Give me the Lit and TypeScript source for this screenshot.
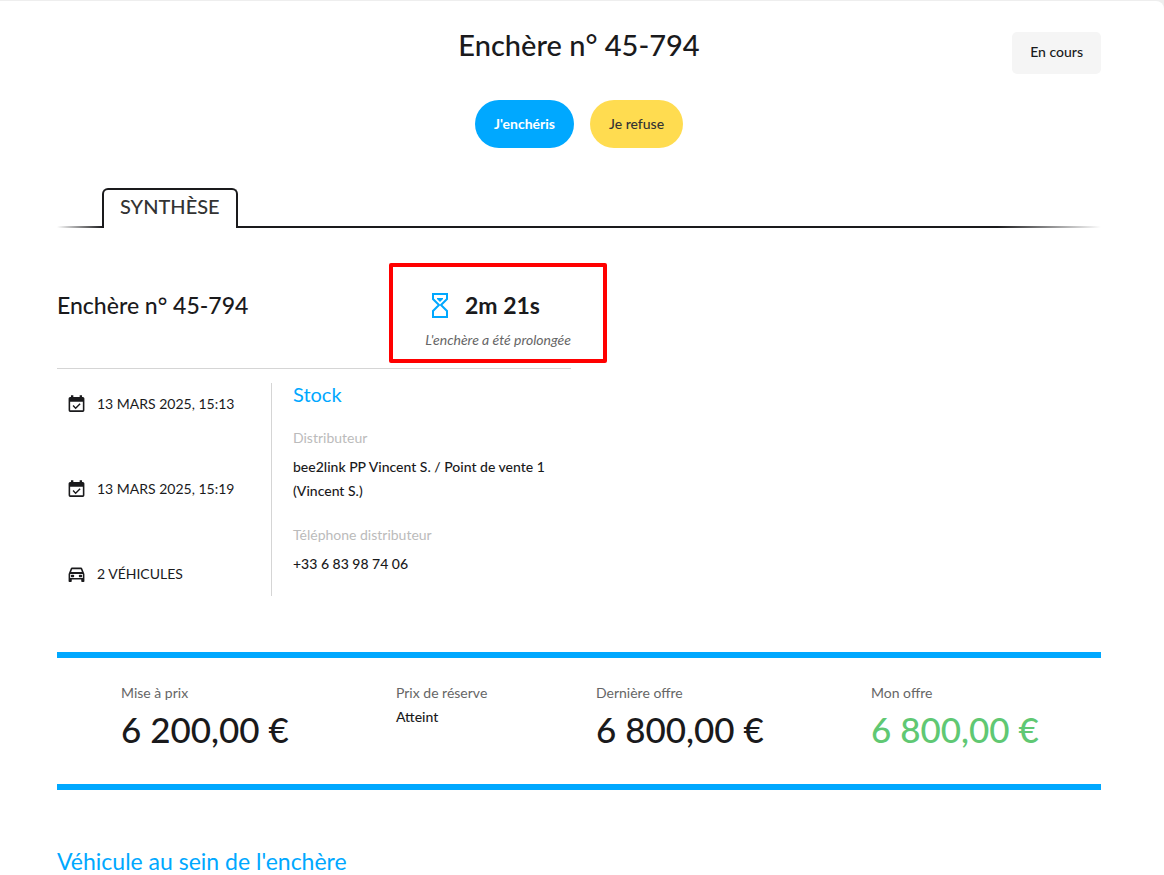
import { LitElement, html, css, svg } from "lit";
import { customElement } from "lit/decorators.js";

const calendar = svg`<path d="M20 3h-1V1h-3v2H8V1H5v2H4a2 2 0 0 0-2 2v15a2 2 0 0 0 2 2h16a2 2 0 0 0 2-2V5a2 2 0 0 0-2-2zm0 17H4V9h16zM17.200 12.200 15.900 11 10.900 16 8.300 13.400 7 14.600 10.900 18.500z"/>`;
const car = svg`<path d="M19.300 5c-.3-.7-.9-1.200-1.600-1.200H6.300c-.7 0-1.300.5-1.600 1.200L2 12v9c0 .6.450 1 1 1h2c.6 0 1-.4 1-1v-2h12v2c0 .6.450 1 1 1h2c.6 0 1-.4 1-1v-9zM6.500 6h11l1.300 3.500H5.200zM20 17H4v-5h16z"/><rect x="5" y="13" width="4" height="3" rx="1"/><rect x="15" y="13" width="4" height="3" rx="1"/>`;

@customElement("app-root")
export class AppRoot extends LitElement {
  static styles = css`
    :host { display: block; min-height: 100vh; overflow: hidden; font-family: Lato, sans-serif; font-size: 14px; line-height: 24px; color: #1a1a1c; background: #eee; padding-top: 1px; box-sizing: border-box; }
    * { box-sizing: border-box; }
    h1, h2, h3, p, dl, dd, ul { margin: 0; padding: 0; font-weight: 400; }
    main { padding: 31px 63px 0 57px; background: #fff; border-top-right-radius: 8px; min-height: 100vh; }
    header { display: grid; grid-template-columns: 1fr auto 1fr; align-items: start; }
    h1 { grid-column: 2; font-size: 29px; line-height: 26px; font-weight: 500; }
    .status { justify-self: end; padding: 8px 18px 10px; border-radius: 5px; background: #f5f5f5; font-weight: 500; }
    .actions { display: flex; justify-content: center; gap: 16px; margin-top: 26px; }
    button { font: inherit; border: 0; border-radius: 24px; height: 48px; padding: 0 19px; background: #ffdc50; color: #333; font-weight: 500; }
    .bid { background: #00a8ff; color: #fff; font-weight: 700; }
    .tabs { display: flex; margin-top: 40px; align-items: flex-end; }
    .line { height: 2px; width: 46px; background: linear-gradient(to right, transparent, #1a1a1c); }
    .rest { flex: 1; width: auto; background: linear-gradient(to left, transparent, #1a1a1c 12%); }
    .tab { height: 40px; margin-left: -1px; border: 2px solid #1a1a1c; border-bottom: 0; border-radius: 6px 6px 0 0; background: #fff; color: #333; padding: 0 16px 6px; font-size: 20px; line-height: 32px; }
    .summary { width: 514px; margin-top: 35px; }
    .heading { display: flex; justify-content: space-between; align-items: flex-start; height: 106px; border-bottom: 1px solid #d5d5d5; }
    h2 { font-size: 23px; line-height: 28px; }
    .heading h2 { margin-top: 28px; font-weight: 500; }
    .timer { border: 4px solid #f00; border-radius: 2px; width: 218px; height: 100px; margin-right: -36px; padding: 24px 32px 0 32px; }
    .time { display: flex; align-items: center; gap: 14px; padding-left: 4px; font-size: 23px; line-height: 28px; font-weight: 700; }
    .time svg { width: 22px; height: 28px; fill: none; stroke: #00a8ff; }
    .timer p { font-style: italic; color: #666; margin-top: 9px; line-height: 24px; text-align: right; white-space: nowrap; }
    .details { display: flex; margin-top: 14px; min-height: 213px; }
    ul { list-style: none; width: 215px; border-right: 1px solid #d5d5d5; display: flex; flex-direction: column; gap: 61px; padding: 9px 0 0 10px; }
    li { display: flex; align-items: center; gap: 11px; }
    li svg { width: 19px; height: 20px; fill: #1a1a1c; }
    .stock { flex: 1; padding-left: 21px; }
    h3 { color: #00a8ff; font-size: 20px; line-height: 22px; }
    .stock dt { color: #bbb; margin-top: 21px; }
    .stock dd { margin-top: 5px; font-weight: 500; }
    .stock dd + dt { margin-top: 20px; }
    .prices { display: grid; grid-template-columns: 275fr 200fr 275fr 230fr; border: solid #00a8ff; border-width: 6px 0; margin-top: 56px; padding: 23px 0 31px 64px; }
    .prices dt { color: #666; }
    .prices dd { font-weight: 500; }
    .prices .amount { font-size: 35px; line-height: 48px; white-space: nowrap; }
    .mine { color: #60c873; }
    .vehicles { color: #00a8ff; margin-top: 57px; }
  `;

  private stamp(icon: unknown, text: string) {
    return html`<li><svg viewBox="0 0 24 24" aria-hidden="true">${icon}</svg><span>${text}</span></li>`;
  }

  private price(label: string, value: string, cls: string) {
    return html`<div><dt>${label}</dt><dd class=${cls}>${value}</dd></div>`;
  }

  render() {
    return html`<main>
      <header><h1>Enchère n° 45-794</h1><span class="status">En cours</span></header>
      <div class="actions"><button class="bid">J'enchéris</button><button>Je refuse</button></div>
      <div class="tabs" role="tablist"><span class="line"></span><button class="tab" role="tab" aria-selected="true">SYNTHÈSE</button><span class="line rest"></span></div>
      <section class="summary">
        <div class="heading"><h2>Enchère n° 45-794</h2>
          <div class="timer"><div class="time"><svg viewBox="0 0 22 28" aria-hidden="true"><path stroke-width="2" d="M4 3H18V8L12 14L18 20V26H4V20L10 14L4 8Z"/><path fill="#00a8ff" stroke="none" d="M8 7H14V8L11 11L8 8Z"/></svg><span>2m 21s</span></div><p>L'enchère a été prolongée</p></div>
        </div>
        <div class="details">
          <ul>${this.stamp(calendar, "13 MARS 2025, 15:13")}${this.stamp(calendar, "13 MARS 2025, 15:19")}${this.stamp(car, "2 VÉHICULES")}</ul>
          <div class="stock"><h3>Stock</h3><dl><dt>Distributeur</dt><dd>bee2link PP Vincent S. / Point de vente 1 (Vincent S.)</dd><dt>Téléphone distributeur</dt><dd>+33 6 83 98 74 06</dd></dl></div>
        </div>
      </section>
      <dl class="prices">${this.price("Mise à prix", "6 200,00 €", "amount")}${this.price("Prix de réserve", "Atteint", "")}${this.price("Dernière offre", "6 800,00 €", "amount")}${this.price("Mon offre", "6 800,00 €", "amount mine")}</dl>
      <h2 class="vehicles">Véhicule au sein de l'enchère</h2>
    </main>`;
  }
}
